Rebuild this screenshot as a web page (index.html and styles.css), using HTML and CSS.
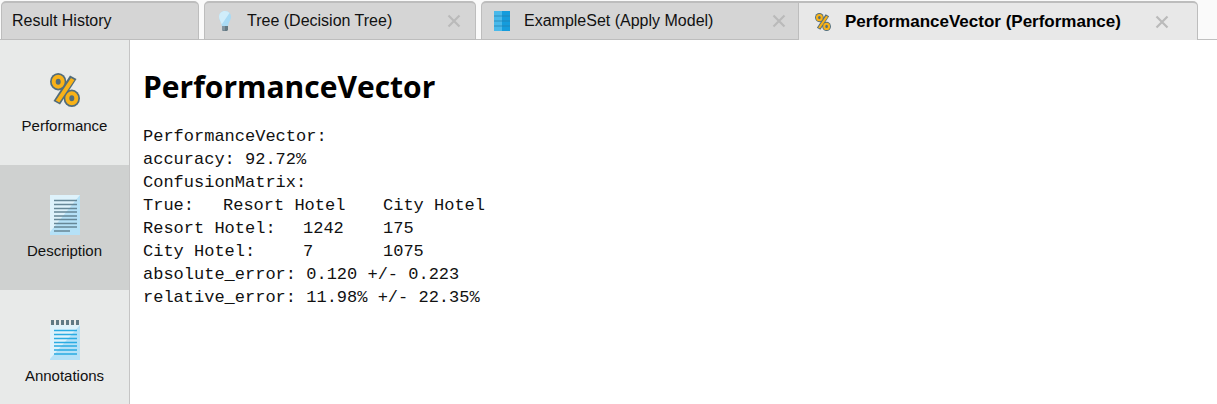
FILE: index.html
```html
<!DOCTYPE html>
<html lang="en">
<head>
<meta charset="utf-8">
<title>PerformanceVector (Performance)</title>
<link rel="stylesheet" href="styles.css">
</head>
<body>
<svg class="defs" aria-hidden="true">
  <symbol id="percent" viewBox="0 0 30 34">
    <g fill="#526d7a">
      <ellipse cx="8.200" cy="8.700" rx="8.200" ry="8.700"/>
      <ellipse cx="21.800" cy="25.300" rx="8.200" ry="8.700"/>
      <path d="M20 2.500 26.500 6 10 31.500 3.500 28Z"/>
    </g>
    <path d="M21 5 24.500 7 9.300 29.500 5.800 27.500Z" fill="#f8b218"/>
    <g fill="none" stroke="#f8b218" stroke-width="4">
      <ellipse cx="8.200" cy="8.700" rx="4.500" ry="5"/>
      <ellipse cx="21.800" cy="25.300" rx="4.500" ry="5"/>
    </g>
  </symbol>
  <symbol id="close" viewBox="0 0 14 14">
    <path d="m1.500 1.500 11 11m0-11-11 11" fill="none" stroke="#bababa" stroke-width="2.200"/>
  </symbol>
</svg>

<header class="tabs">
  <div class="tab tab-history"><button class="tab-label">Result History</button></div>
  <div class="tab tab-tree">
    <button class="tab-label">
      <svg class="tab-icon" viewBox="0 0 16 20">
        <path d="M8 0C4.500 0 2 2.500 2 6c0 3 2.500 5 3 9.500h6c.5-4.500 3-6.500 3-9.500C14 2.500 11.500 0 8 0Z" fill="#a9dbf5"/>
        <path d="M8 0C4.500 0 2 2.500 2 6c0 2.500 2 4.500 2.700 7.500L12.500 2C11.500.8 9.800 0 8 0Z" fill="#d0edfa"/>
        <path d="M5 15h6v4l-1 1H6l-1-1Z" fill="#637983"/>
        <path d="M5 15h3v4.500H6L5 19Z" fill="#8194a0"/>
      </svg>Tree (Decision Tree)</button>
    <button class="close" aria-label="Close Tree"><svg viewBox="0 0 14 14"><use href="#close"/></svg></button>
  </div>
  <div class="tab tab-example">
    <button class="tab-label">
      <svg class="tab-icon" viewBox="0 0 16 20">
        <path d="M0 0h8v20H0Z" fill="#49b9ea"/><path d="M8 0h8v20H8Z" fill="#149cdc"/>
        <path d="M0 5h16M0 10h16M0 15h16" stroke="#237fac" stroke-width=".7"/>
      </svg>ExampleSet (Apply Model)</button>
    <button class="close" aria-label="Close ExampleSet"><svg viewBox="0 0 14 14"><use href="#close"/></svg></button>
  </div>
  <div class="tab tab-vector active">
    <button class="tab-label"><svg class="tab-icon percent" viewBox="0 0 30 34"><use href="#percent"/></svg>PerformanceVector (Performance)</button>
    <button class="close" aria-label="Close PerformanceVector"><svg viewBox="0 0 14 14"><use href="#close"/></svg></button>
  </div>
</header>

<div class="workspace">
  <nav class="sidebar">
    <button class="view"><svg class="view-icon percent" viewBox="0 0 30 34"><use href="#percent"/></svg>Performance</button>
    <button class="view selected">
      <svg class="view-icon" viewBox="0 0 30 40">
        <path d="M0 0h30v40H0Z" fill="#b5e1f7"/><path d="M0 0h30L0 37Z" fill="#def2fb"/>
        <path d="M4 5.500h23M4 9.500h23M4 13.500h23M4 17h23M4 21h23M4 24.500h23M4 28.500h23M4 32h23M4 36h16" stroke="#668797" stroke-width="1.300"/>
      </svg>Description</button>
    <button class="view">
      <svg class="view-icon" viewBox="0 0 30 40">
        <path d="M0 5h30v35H0Z" fill="#b5e1f7"/><path d="M0 5h30L0 39Z" fill="#def2fb"/>
        <path d="M0 2.500h30" stroke="#607a85" stroke-width="5" stroke-dasharray="3 2" stroke-dashoffset="-1"/>
        <path d="M4 10.500h23M4 14.500h23M4 18.500h23M4 22.500h23M4 26h23M4 30h23M4 34h23" stroke="#29abe2" stroke-width="1.400"/>
      </svg>Annotations</button>
  </nav>
  <main class="content">
    <h1>PerformanceVector</h1>
    <pre>PerformanceVector:
accuracy: 92.72%
ConfusionMatrix:
True:&#9;Resort Hotel&#9;City Hotel
Resort Hotel:&#9;1242&#9;175
City Hotel:&#9;7&#9;1075
absolute_error: 0.120 +/- 0.223
relative_error: 11.98% +/- 22.35%</pre>
  </main>
</div>
</body>
</html>
```
FILE: styles.css
```css
* { box-sizing: border-box; }

body {
  margin: 0;
  min-height: 100vh;
  display: flex;
  flex-direction: column;
  background: #fff;
  color: #111;
  font-family: "Liberation Sans", Arial, sans-serif;
  font-size: 16px;
}

button {
  padding: 0;
  border: 0;
  background: none;
  color: inherit;
  font: inherit;
  white-space: nowrap;
}

.defs {
  position: absolute;
  width: 0;
  height: 0;
}

.tabs {
  display: flex;
  padding: 1px 0 0 1px;
  background: linear-gradient(#c0c0c0, #c0c0c0) bottom / 100% 1px no-repeat #fafafa;
}

.tab {
  display: flex;
  align-items: center;
  justify-content: space-between;
  height: 39px;
  margin-right: 5px;
  padding: 0 14px 0 10px;
  border: 1px solid #bdbdbd;
  border-top-width: 2px;
  border-radius: 5px 5px 0 0;
  background: #d5d5d5;
}

.tab-history { flex: 0 1 198px; }
.tab-tree { flex: 0 1 272px; }
.tab-example {
  flex: 0 1 317px;
  margin-right: 0;
  padding: 0 12px;
  border-right: 0;
  border-top-right-radius: 0;
}
.tab-vector {
  flex: 0 1 400px;
  margin-right: 0;
  padding: 0 28px 0 16px;
  border-top-left-radius: 0;
}

.tab.active {
  border-bottom: 0;
  background: #e8e8e8;
  color: #000;
  font-size: 17px;
  font-weight: bold;
}

.tab-label {
  display: flex;
  align-items: center;
  gap: 14px;
}

.tab-tree .tab-label { padding-left: 2px; }

.tab-icon {
  width: 16px;
  height: 20px;
}

.tab-icon.percent { height: 18px; }

.close {
  display: flex;
}

.close svg {
  width: 14px;
  height: 14px;
}

.workspace {
  display: flex;
  flex: 1;
}

.sidebar {
  flex: 0 0 130px;
  height: calc(100vh - 40px);
  overflow: hidden;
  border-right: 1px solid #c5c5c5;
  background: #e8eae9;
}

.view {
  display: flex;
  flex-direction: column;
  align-items: center;
  justify-content: center;
  gap: 7px;
  width: 100%;
  height: 125px;
  padding-bottom: 2px;
  font-size: 15px;
}

.view.selected { background: #cfd1d0; }

.view-icon {
  width: 30px;
  height: 40px;
}

.content {
  flex: 1;
  padding: 27px 13px;
}

h1 {
  margin: 0 0 18px;
  color: #000;
  font: bold 30px/40px "Open Sans", "Noto Sans", sans-serif;
}

pre {
  margin: 0;
  font: 17px/23px "Liberation Mono", "Courier New", monospace;
  tab-size: 80px;
}
```
